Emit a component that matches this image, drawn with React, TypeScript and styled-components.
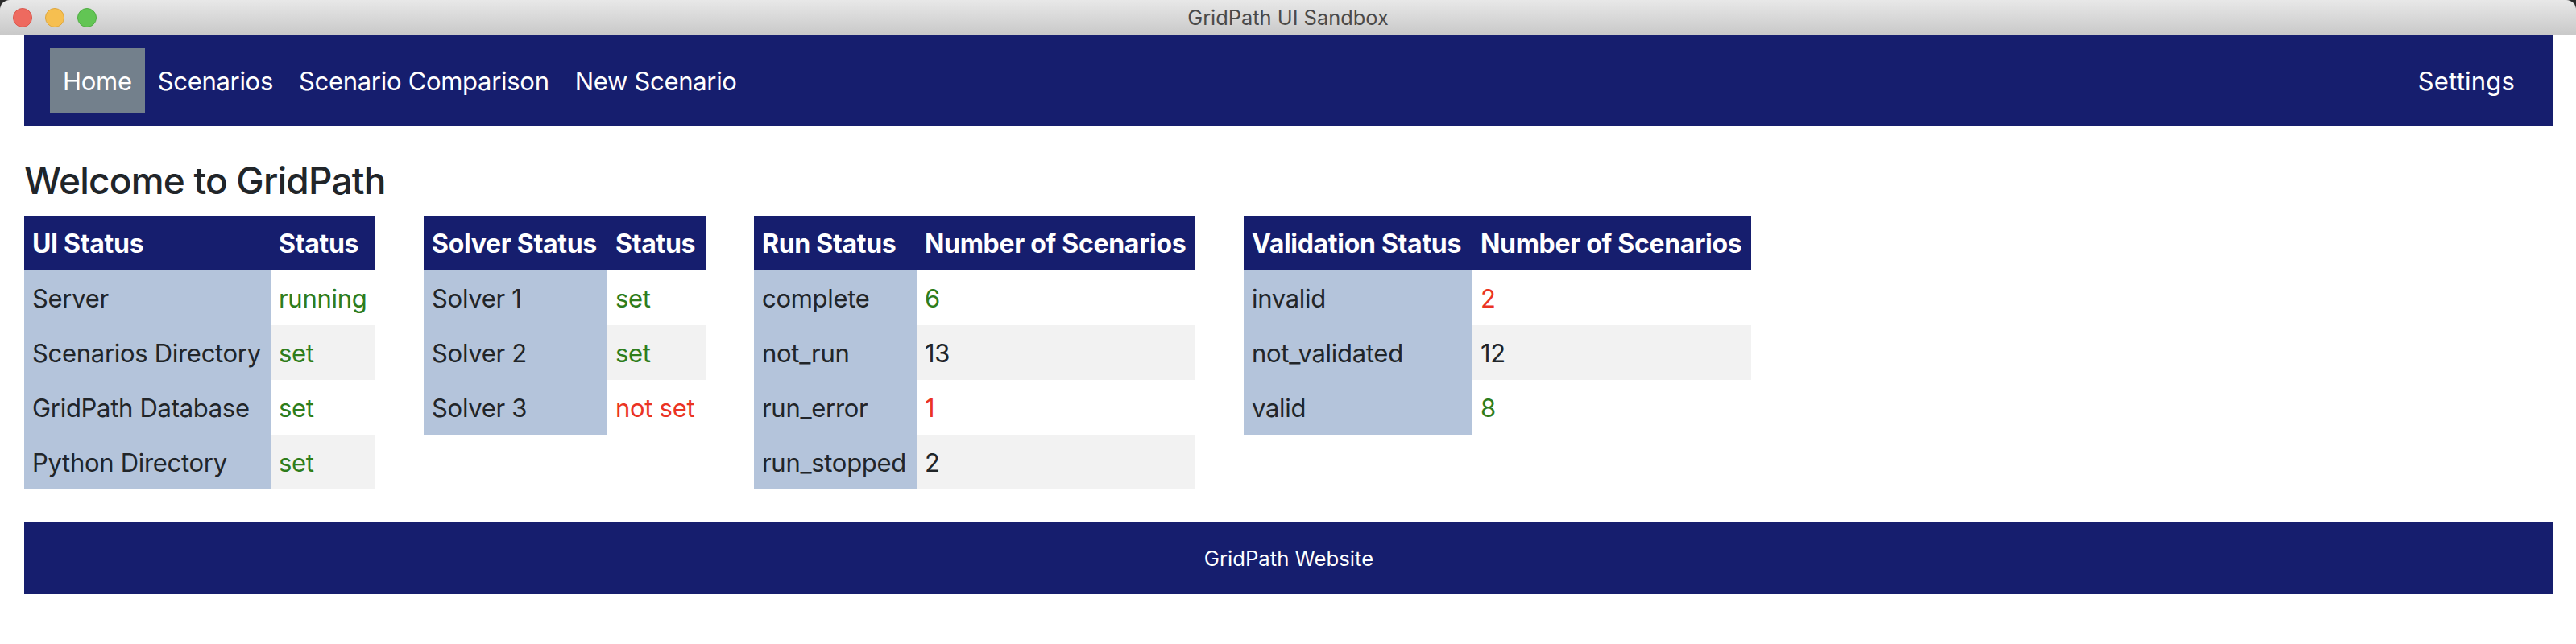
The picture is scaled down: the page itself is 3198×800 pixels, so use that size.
import React from "react";
import styled, { createGlobalStyle } from "styled-components";

const Global = createGlobalStyle`
  html, body { margin: 0; padding: 0; background: #fff; }
  body { font-family: Inter, "Noto Sans", "Liberation Sans", sans-serif; color: #212529; }
`;

const Corner = styled.div`
  background: #2a2a2a;
`;
const TitleBar = styled.header`
  height: 44px;
  box-sizing: border-box;
  position: relative;
  display: flex;
  align-items: center;
  justify-content: center;
  border-radius: 12px 12px 0 0;
  border-bottom: 1px solid #a9a9a9;
  background: linear-gradient(#e8e8e8, #c9c9c9);
  font-size: 25.4px;
  color: #4a4a4a;
`;
const Lights = styled.div`
  position: absolute;
  left: 16px;
  top: 10px;
  display: flex;
  gap: 16px;
`;
const Light = styled.span<{ $bg: string; $edge: string }>`
  width: 24px;
  height: 24px;
  box-sizing: border-box;
  border-radius: 50%;
  background: ${(p) => p.$bg};
  border: 1px solid ${(p) => p.$edge};
`;
const Page = styled.div`
  padding: 0 28px 0 30px;
`;
const Nav = styled.nav`
  height: 112px;
  box-sizing: border-box;
  padding: 16px 32px;
  display: flex;
  justify-content: space-between;
  background: #161e6e;
`;
const NavGroup = styled.div`
  display: flex;
`;
const NavLink = styled.a<{ $active?: boolean; $spacing?: string }>`
  height: 80px;
  padding: 0 16px;
  display: flex;
  align-items: center;
  font-size: 31px;
  letter-spacing: ${(p) => p.$spacing ?? "-0.3px"};
  color: #fff;
  background: ${(p) => (p.$active ? "#73808c" : "transparent")};
`;
const Heading = styled.h1`
  margin: 0;
  height: 112px;
  box-sizing: border-box;
  padding-top: 42px;
  font-size: 46px;
  letter-spacing: -0.8px;
  line-height: 52px;
  font-weight: 500;
  color: #212529;
`;
const Tables = styled.div`
  display: flex;
  align-items: flex-start;
  gap: 60px;
`;
const Table = styled.table`
  border-collapse: collapse;
  table-layout: fixed;
  font-size: 31px;
  letter-spacing: -0.3px;
`;
const Th = styled.th`
  height: 68px;
  padding: 0 10px;
  box-sizing: border-box;
  background: #161e6e;
  color: #fff;
  text-align: left;
  font-size: 32px;
  letter-spacing: -0.3px;
  font-weight: 700;
  white-space: nowrap;
`;
const Row = styled.tr`
  &:nth-child(even) td:last-child { background: #f2f2f2; }
`;
const Label = styled.td`
  height: 68px;
  padding: 0 10px;
  box-sizing: border-box;
  background: #b4c4db;
  color: #212529;
  white-space: nowrap;
`;
const Value = styled.td<{ $tone?: "ok" | "bad" }>`
  height: 68px;
  padding: 0 10px;
  box-sizing: border-box;
  white-space: nowrap;
  color: ${(p) => (p.$tone === "ok" ? "#2e7d1c" : p.$tone === "bad" ? "#eb3323" : "#212529")};
`;
const Footer = styled.footer`
  margin-top: 40px;
  height: 90px;
  display: flex;
  align-items: center;
  justify-content: center;
  background: #161e6e;
  color: #fff;
  font-size: 25.7px;
`;

type Tone = "ok" | "bad" | undefined;
type Data = { heads: [string, string]; widths: [number, number]; rows: [string, string, Tone][] };

const tables: Data[] = [
  {
    heads: ["UI Status", "Status"],
    widths: [306, 130],
    rows: [
      ["Server", "running", "ok"],
      ["Scenarios Directory", "set", "ok"],
      ["GridPath Database", "set", "ok"],
      ["Python Directory", "set", "ok"],
    ],
  },
  {
    heads: ["Solver Status", "Status"],
    widths: [228, 122],
    rows: [
      ["Solver 1", "set", "ok"],
      ["Solver 2", "set", "ok"],
      ["Solver 3", "not set", "bad"],
    ],
  },
  {
    heads: ["Run Status", "Number of Scenarios"],
    widths: [202, 346],
    rows: [
      ["complete", "6", "ok"],
      ["not_run", "13", undefined],
      ["run_error", "1", "bad"],
      ["run_stopped", "2", undefined],
    ],
  },
  {
    heads: ["Validation Status", "Number of Scenarios"],
    widths: [284, 346],
    rows: [
      ["invalid", "2", "bad"],
      ["not_validated", "12", undefined],
      ["valid", "8", "ok"],
    ],
  },
];

export default function App() {
  return (
    <>
      <Global />
      <Corner>
        <TitleBar>
          <Lights>
            <Light $bg="#ee6a5f" $edge="#d9574d" />
            <Light $bg="#f6bf50" $edge="#dea63c" />
            <Light $bg="#62c554" $edge="#50ad43" />
          </Lights>
          GridPath UI Sandbox
        </TitleBar>
      </Corner>
      <Page>
        <Nav>
          <NavGroup>
            <NavLink $active>Home</NavLink>
            <NavLink>Scenarios</NavLink>
            <NavLink>Scenario Comparison</NavLink>
            <NavLink>New Scenario</NavLink>
          </NavGroup>
          <NavGroup>
            <NavLink $spacing="0.2px">Settings</NavLink>
          </NavGroup>
        </Nav>
        <Heading>Welcome to GridPath</Heading>
        <Tables>
          {tables.map((t) => (
            <Table key={t.heads[0]} style={{ width: t.widths[0] + t.widths[1] }}>
              <colgroup>
                <col style={{ width: t.widths[0] }} />
                <col style={{ width: t.widths[1] }} />
              </colgroup>
              <thead>
                <tr>
                  <Th>{t.heads[0]}</Th>
                  <Th>{t.heads[1]}</Th>
                </tr>
              </thead>
              <tbody>
                {t.rows.map((r) => (
                  <Row key={r[0]}>
                    <Label>{r[0]}</Label>
                    <Value $tone={r[2]}>{r[1]}</Value>
                  </Row>
                ))}
              </tbody>
            </Table>
          ))}
        </Tables>
        <Footer>GridPath Website</Footer>
      </Page>
    </>
  );
}
